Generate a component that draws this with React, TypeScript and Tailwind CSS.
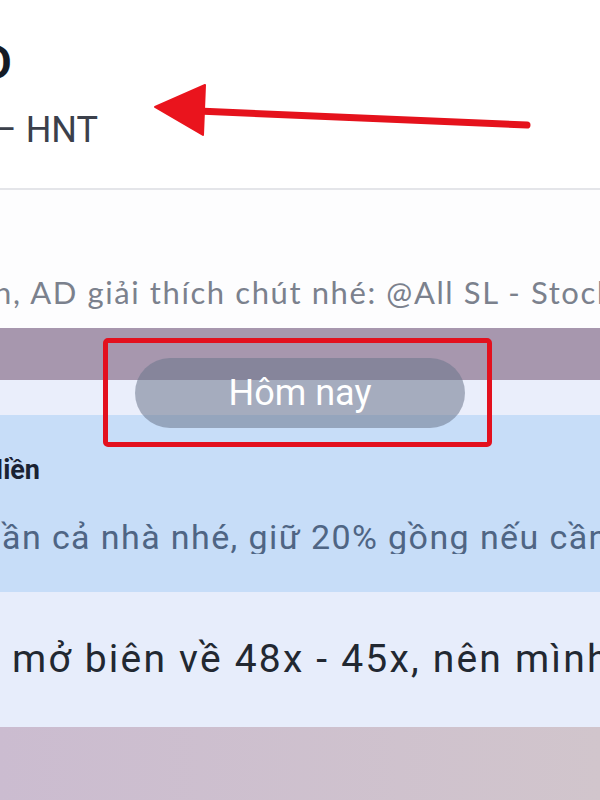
import React from "react";

function ClipEnd({
  width,
  children,
  className,
}: {
  width: string;
  children: React.ReactNode;
  className?: string;
}) {
  // right-aligned box: the start of the text runs off the left edge
  return (
    <div className={`flex shrink-0 justify-end overflow-hidden ${width} ${className ?? ""}`}>
      <span className="shrink-0 whitespace-nowrap">{children}</span>
    </div>
  );
}

function Annotations() {
  return (
    <>
      <svg
        className="pointer-events-none absolute left-0 top-0"
        width="600"
        height="200"
        viewBox="0 0 600 200"
        aria-hidden="true"
      >
        <line x1="198" y1="111" x2="527" y2="125" stroke="#e5121c" strokeWidth="7" strokeLinecap="round" />
        <polygon points="155,107 205,85 203,135" fill="#ea141d" stroke="#ea141d" strokeWidth="2" strokeLinejoin="round" />
      </svg>
      <div className="pointer-events-none absolute left-[103px] top-[338px] h-[109px] w-[389px] rounded-[5px] border-[5px] border-[#e3101e]" />
    </>
  );
}

export default function App() {
  return (
    <div className="relative flex h-[800px] w-[600px] flex-col overflow-hidden bg-white font-['Roboto','Liberation_Sans',sans-serif]">
      {/* conversation header */}
      <header className="flex h-[190px] shrink-0 flex-col border-b-2 border-[#e4e5e9] bg-white pt-[39px]">
        <ClipEnd width="w-[12px]" className="text-[48px] font-semibold leading-none text-[#151b26]">
          NHÓM VIP D
        </ClipEnd>
        <ClipEnd width="w-[98px]" className="mt-[25px] text-[36px] leading-none text-[#3b404b]">
          Cộng đồng SL – HNT
        </ClipEnd>
      </header>

      {/* pinned message preview */}
      <div className="flex h-[138px] shrink-0 items-end overflow-hidden whitespace-nowrap bg-[#fdfdfe] pb-[20px] font-['Lato','Liberation_Sans',sans-serif] text-[31px] leading-none tracking-[1.6px] text-[#7b818d]">
        <ClipEnd width="w-[13px]">Mọi người hỏi nhiều quá nên tranh thủ nhanh</ClipEnd>
        <span className="shrink-0">, AD giải thích chút nhé: @All SL - Stock</span>
      </div>

      {/* chat area */}
      <div className="relative flex flex-1 flex-col">
        <div className="h-[52px] shrink-0 bg-[#a797ae]" />
        <div className="h-[35px] shrink-0 bg-[#eaeefb]" />

        <div className="flex h-[177px] shrink-0 flex-col bg-[#c7ddf8] pt-[42px]">
          <ClipEnd width="w-[40px]" className="text-[27px] font-bold leading-none text-[#1a2233]">
            Nguyễn Thị Hiền
          </ClipEnd>
          <div className="mt-[36px] flex overflow-hidden whitespace-nowrap text-[34px] leading-none tracking-[1.4px] text-[#4f6584]">
            <ClipEnd width="w-[2px]">Hạ tỷ trọng d</ClipEnd>
            <span className="shrink-0">ần cả nhà nhé, giữ 20% gồng nếu cần</span>
          </div>
        </div>

        <div className="flex h-[135px] shrink-0 items-center overflow-hidden whitespace-nowrap bg-[#e7edfb] pl-[12px] text-[39px] leading-none tracking-[2.2px] text-[#222831]">
          <span className="shrink-0">mở biên về 48x - 45x, nên mình chủ động</span>
        </div>

        <div className="flex-1 bg-gradient-to-r from-[#cbbcd0] to-[#d1c5cc]" />

        {/* date divider */}
        <div className="absolute left-[135px] top-[30px] flex h-[70px] w-[330px] items-center justify-center rounded-full bg-[rgba(108,118,140,0.55)] text-[36px] text-white">
          Hôm nay
        </div>
      </div>

      <Annotations />
    </div>
  );
}
